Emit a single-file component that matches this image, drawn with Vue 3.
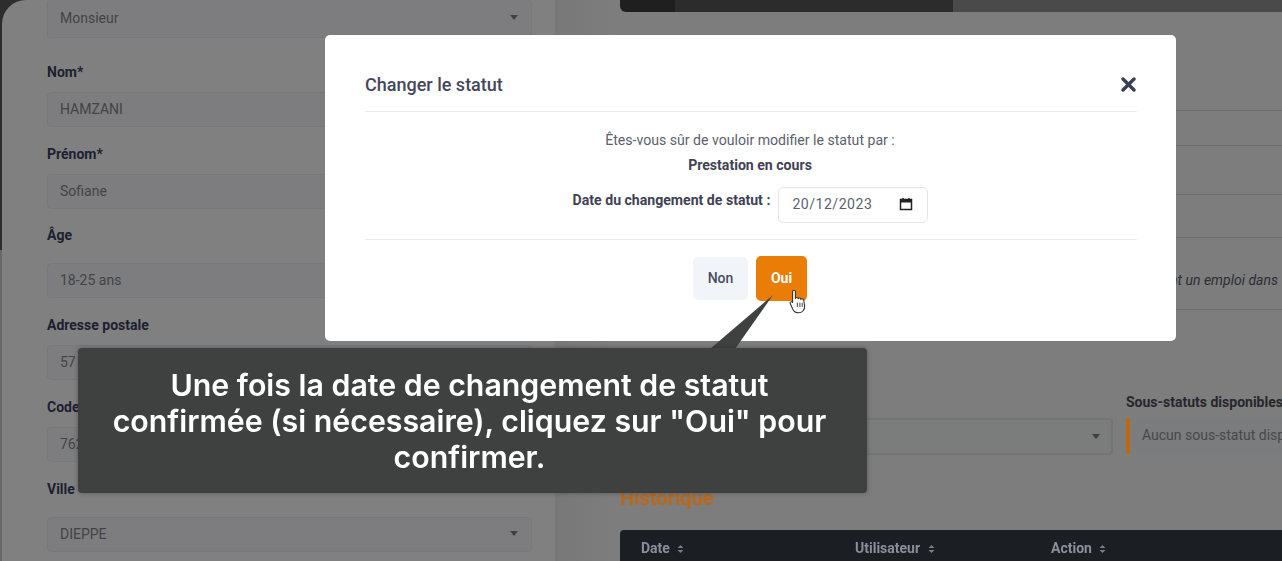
<script setup>
const fields = [
  { label: 'Nom*', value: 'HAMZANI', cls: 'first' },
  { label: 'Prénom*', value: 'Sofiane' },
  { label: 'Âge', value: '18-25 ans', select: true, cls: 'age' },
  { label: 'Adresse postale', value: '57 rue de la République' },
  { label: 'Code postal', value: '76200' },
  { label: 'Ville', value: 'DIEPPE', select: true }
]
const columns = [
  { name: 'Date', cls: 'col-date' },
  { name: 'Utilisateur', cls: 'col-user' },
  { name: 'Action', cls: 'col-action' }
]
</script>

<template>
  <div class="screen">
    <div class="page">
      <section class="card-left">
        <div class="control control-select top-control">
          <span>Monsieur</span>
          <i class="caret"></i>
        </div>
        <div v-for="f in fields" :key="f.label" class="field" :class="[f.cls, { 'is-select': f.select }]">
          <label>{{ f.label }}</label>
          <div class="control" :class="{ 'control-select': f.select }">
            <span>{{ f.value }}</span>
            <i v-if="f.select" class="caret"></i>
          </div>
        </div>
      </section>

      <section class="card-right">
        <div class="topbar">
          <span class="seg seg-a"></span>
          <span class="seg seg-b"></span>
          <span class="seg seg-c"></span>
        </div>
        <div class="rows">
          <div class="row row-1"></div>
          <div class="row row-2"></div>
          <div class="row row-3"></div>
          <div class="row row-4"></div>
          <div class="row row-5"><em>Le bénéficiaire obtient un emploi dans</em></div>
        </div>
        <div class="status-grid">
          <div class="status-select">
            <i class="caret"></i>
          </div>
          <div class="status-sub">
            <strong>Sous-statuts disponibles</strong>
            <div class="sub-note">Aucun sous-statut disponible</div>
          </div>
        </div>
        <h2 class="history">Historique</h2>
        <div class="thead">
          <div v-for="c in columns" :key="c.name" class="th" :class="c.cls">
            {{ c.name }}
            <svg class="sort" width="7" height="10" viewBox="0 0 7 10">
              <path d="M3.5 1 6.5 4H.5zM3.5 9 .5 6h6z" fill="currentColor" />
            </svg>
          </div>
        </div>
      </section>
    </div>

    <div class="modal">
      <header class="modal-head">
        <h3>Changer le statut</h3>
        <svg class="close" width="15" height="15" viewBox="0 0 15 15">
          <path d="M2 2 13 13M13 2 2 13" stroke="#3a3f52" stroke-width="3.4" stroke-linecap="round" />
        </svg>
      </header>
      <div class="modal-body">
        <p class="q">Êtes-vous sûr de vouloir modifier le statut par :</p>
        <p class="status-name">Prestation en cours</p>
        <div class="date-row">
          <strong>Date du changement de statut :</strong>
          <div class="date-input">
            <span>20/12/2023</span>
            <svg width="14" height="14" viewBox="0 0 14 14">
              <path d="M1.5 2.5h11v10h-11z" fill="none" stroke="#222" stroke-width="1.5" />
              <path d="M1.5 2.5h11v3h-11z" fill="#222" />
              <path d="M4 1v2M10 1v2" stroke="#222" stroke-width="1.4" />
            </svg>
          </div>
        </div>
      </div>
      <footer class="modal-foot">
        <button class="btn btn-no" type="button">Non</button>
        <button class="btn btn-yes" type="button">Oui</button>
      </footer>
    </div>

    <svg class="tail" width="70" height="56" viewBox="0 0 70 56">
      <path d="M66 1 3 55H28Z" fill="#3f4040" />
    </svg>

    <svg class="cursor" width="18" height="25" viewBox="0 0 18 25">
      <path d="M3.6 2.6C3.6 .8 6.4 .8 6.4 2.6V9.6C6.6 8.2 9 8.2 9.2 9.8 9.5 8.6 11.6 8.8 11.8 10.4 12.2 9.4 14.6 9.6 14.8 11.4L15.6 17C15.9 20.6 13.4 23.8 9.6 23.8 6.6 23.8 5 22.6 3.8 20.2L1.2 14.6C.6 13 2.6 12 3.6 13.4Z" fill="#fff" stroke="#333" stroke-width="1.1" stroke-linejoin="round" />
      <path d="M8.4 13.6V18M10.9 13.6V18M13.2 13.8V18" stroke="#333" stroke-width=".9" />
    </svg>

    <div class="callout">
      Une fois la date de changement de statut<br />
      confirmée (si nécessaire), cliquez sur "Oui" pour<br />
      confirmer.
    </div>
  </div>
</template>

<style>
html, body { margin: 0; padding: 0; overflow: hidden; }
</style>

<style scoped>
.screen {
  position: relative;
  width: 1282px;
  height: 561px;
  overflow: hidden;
  font-family: Roboto, "Liberation Sans", sans-serif;
  font-size: 14px;
  color: #1c1e2a;
  background: linear-gradient(to bottom, #2d2d2d 0, #2d2d2d 250px, #686868 250px, #686868 100%);
}
.page {
  display: flex;
  height: 561px;
  margin-left: 2px;
  filter: blur(0.45px);
}
.card-left {
  width: 553px;
  flex: none;
  box-sizing: border-box;
  padding-left: 45px;
  background: #808080;
  border-top-left-radius: 24px;
}
.control {
  box-sizing: border-box;
  width: 485px;
  height: 35px;
  padding: 0 12px 2px;
  display: flex;
  align-items: center;
  justify-content: space-between;
  background: #7d7d7f;
  border: 1px solid #777879;
  border-radius: 4px;
  color: #414347;
  font-size: 14px;
}
.top-control { height: 38px; border-top: 0; }
.caret {
  width: 0;
  height: 0;
  margin-right: 1px;
  border-left: 4px solid transparent;
  border-right: 4px solid transparent;
  border-top: 5px solid #3e4046;
}
.field { margin-top: 17px; }
.field.first { margin-top: 24px; }
.field.age { margin-top: 16px; }
.field label {
  display: block;
  height: 20px;
  line-height: 20px;
  margin-bottom: 10px;
  font-weight: 700;
  color: #1d2030;
}
.field.is-select label { margin-bottom: 18px; }
.field.is-select .control { margin-bottom: 1px; }

.card-right {
  flex: 1;
  min-width: 0;
  padding-left: 65px;
  background: linear-gradient(to right, #787878 0, #7d7d7d 60px);
}
.topbar { display: flex; height: 12px; border-bottom-left-radius: 6px; overflow: hidden; }
.seg { display: block; height: 100%; }
.seg-a { width: 55px; background: #1f1f1f; }
.seg-b { width: 278px; background: #2c2c2c; }
.seg-c { flex: 1; background: #4a4a4a; }
.rows { height: 298px; }
.row { box-sizing: border-box; border-bottom: 1px solid #6e6e6e; }
.row-1 { height: 99px; }
.row-2 { height: 35px; }
.row-3 { height: 49px; }
.row-4 { height: 43px; }
.row-5 {
  height: 72px;
  display: flex;
  justify-content: flex-end;
  align-items: center;
  padding: 12px 4px 0 0;
  white-space: nowrap;
  color: #2c2e36;
}
.status-grid { display: flex; margin-top: 84px; gap: 13px; }
.status-select {
  box-sizing: border-box;
  width: 493px;
  height: 37px;
  margin-top: 24px;
  display: flex;
  align-items: center;
  justify-content: flex-end;
  padding-right: 10px;
  background: #7b7c7c;
  border: 2px solid #747474;
  border-radius: 4px;
}
.status-sub { flex: 1; min-width: 0; white-space: nowrap; overflow: hidden; }
.status-sub strong {
  display: block;
  height: 24px;
  line-height: 16px;
  color: #26272c;
  font-size: 14px;
}
.sub-note {
  height: 36px;
  line-height: 34px;
  padding-left: 12px;
  border-left: 4px solid #bb6a10;
  background: #7b7c7d;
  color: #46484c;
}
.history {
  margin: 28px 0 0;
  height: 32px;
  line-height: 30px;
  font-size: 20px;
  font-weight: 700;
  color: #b9681a;
}
.thead {
  display: flex;
  height: 60px;
  margin-top: 15px;
  background: #1b1e23;
  border-radius: 4px 0 0 0;
  color: #8a8f9b;
  font-weight: 700;
  font-size: 14px;
}
.th { padding-top: 10px; display: block; }
.sort { margin-left: 4px; vertical-align: -1px; color: #7a7d85; }
.col-date { width: 235px; padding-left: 21px; box-sizing: border-box; }
.col-user { width: 196px; }
.col-action { flex: 1; }

.modal {
  position: absolute;
  left: 325px;
  top: 35px;
  width: 851px;
  height: 306px;
  box-sizing: border-box;
  padding: 0 39px 0 40px;
  background: #fff;
  border-radius: 5px;
  color: #3f4254;
  font-size: 14.1px;
}
.modal-head {
  height: 77px;
  box-sizing: border-box;
  padding-top: 23px;
  display: flex;
  align-items: center;
  justify-content: space-between;
  border-bottom: 1px solid #e9ebef;
}
.modal-head h3 {
  margin: 0;
  font-size: 18px;
  font-weight: 500;
  color: #44475a;
}
.close { margin-right: 1px; }
.modal-body {
  height: 128px;
  box-sizing: border-box;
  padding-top: 17px;
  border-bottom: 1px solid #e9ebef;
  display: flex;
  flex-direction: column;
  align-items: center;
}
.q { margin: 0 2px 0 0; height: 25px; line-height: 22px; color: #5c5f6e; }
.status-name { margin: 0 2px 0 0; height: 33px; line-height: 22px; font-weight: 700; color: #3f4254; }
.date-row { display: flex; align-items: flex-start; gap: 8px; margin-right: 1px; }
.date-row strong { line-height: 26px; color: #3f4254; }
.date-input {
  box-sizing: border-box;
  width: 150px;
  height: 36px;
  padding: 0 14px 2px 13px;
  display: flex;
  align-items: center;
  justify-content: space-between;
  border: 1px solid #e4e6ef;
  border-radius: 5px;
  color: #5c5f6e;
  letter-spacing: 0.5px;
}
.modal-foot {
  display: flex;
  justify-content: center;
  align-items: center;
  gap: 8px;
  padding-top: 16px;
  padding-right: 2px;
}
.btn {
  border: 0;
  border-radius: 5px;
  font-family: inherit;
  font-size: 14px;
  padding: 0 0 2px;
}
.btn-no { width: 55px; height: 43px; background: #f1f4f9; color: #4a4d5e; font-weight: 500; }
.btn-yes { width: 51px; height: 45px; background: #e97d06; color: #fff; font-weight: 700; }
.tail { position: absolute; left: 707px; top: 294px; }
.cursor { position: absolute; left: 789px; top: 289px; }
.callout {
  position: absolute;
  left: 78px;
  top: 348px;
  width: 789px;
  height: 145px;
  box-sizing: border-box;
  padding: 19px 6px 0 0;
  background: #3f4040;
  border-radius: 4px;
  box-shadow: 0 0 5px rgba(0, 0, 0, 0.3);
  color: #fff;
  text-align: center;
  font-family: Inter, sans-serif;
  font-size: 30.3px;
  font-weight: 600;
  line-height: 36px;
}
</style>
